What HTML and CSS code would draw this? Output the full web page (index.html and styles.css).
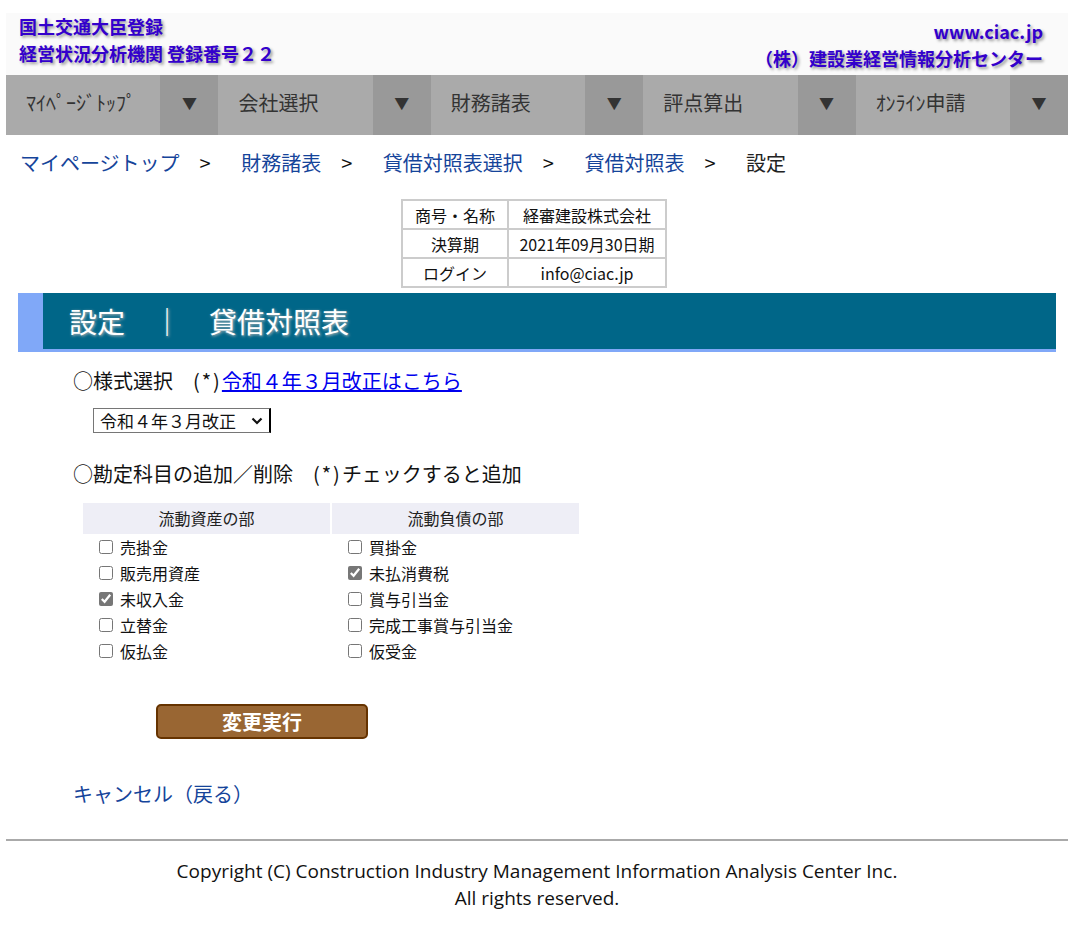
FILE: index.html
```html
<!DOCTYPE html>
<html lang="ja">
<head>
<meta charset="utf-8">
<title>設定 | 貸借対照表</title>
<link rel="stylesheet" href="styles.css">
</head>
<body>
<div class="page">
  <header class="site-header">
    <div class="org">
      <div>国土交通大臣登録</div>
      <div>経営状況分析機関 登録番号２２</div>
    </div>
    <div class="site">
      <div>www.ciac.jp</div>
      <div>（株）建設業経営情報分析センター</div>
    </div>
  </header>
  <nav class="menu">
    <div class="menu-item"><span class="menu-label">ﾏｲﾍﾟｰｼﾞﾄｯﾌﾟ</span><span class="menu-arrow">▼</span></div>
    <div class="menu-item"><span class="menu-label">会社選択</span><span class="menu-arrow">▼</span></div>
    <div class="menu-item"><span class="menu-label">財務諸表</span><span class="menu-arrow">▼</span></div>
    <div class="menu-item"><span class="menu-label">評点算出</span><span class="menu-arrow">▼</span></div>
    <div class="menu-item"><span class="menu-label">ｵﾝﾗｲﾝ申請</span><span class="menu-arrow">▼</span></div>
  </nav>
  <div class="crumbs">
    <a href="#">マイページトップ</a><span class="sep">&gt;</span>
    <a href="#">財務諸表</a><span class="sep">&gt;</span>
    <a href="#">貸借対照表選択</a><span class="sep">&gt;</span>
    <a href="#">貸借対照表</a><span class="sep">&gt;</span>
    <span class="current">設定</span>
  </div>
  <div class="info-wrap">
    <table class="info">
      <tr><th>商号・名称</th><td>経審建設株式会社</td></tr>
      <tr><th>決算期</th><td>2021年09月30日期</td></tr>
      <tr><th>ログイン</th><td>info@ciac.jp</td></tr>
    </table>
  </div>
  <h1 class="title-bar"><span class="title-text">設定　｜　貸借対照表</span></h1>
  <div class="content">
    <p class="section first">○様式選択　<span class="ast">(*)</span><a class="plain-link" href="#">令和４年３月改正はこちら</a></p>
    <div class="select-row">
      <select class="style-select"><option>令和４年３月改正</option></select>
    </div>
    <p class="section">○勘定科目の追加／削除　<span class="ast">(*)</span>チェックすると追加</p>
    <div class="acct-grid">
      <div class="acct-col">
        <div class="acct-head">流動資産の部</div>
        <label class="acct"><input type="checkbox">売掛金</label>
        <label class="acct"><input type="checkbox">販売用資産</label>
        <label class="acct"><input type="checkbox" checked>未収入金</label>
        <label class="acct"><input type="checkbox">立替金</label>
        <label class="acct"><input type="checkbox">仮払金</label>
      </div>
      <div class="acct-col">
        <div class="acct-head">流動負債の部</div>
        <label class="acct"><input type="checkbox">買掛金</label>
        <label class="acct"><input type="checkbox" checked>未払消費税</label>
        <label class="acct"><input type="checkbox">賞与引当金</label>
        <label class="acct"><input type="checkbox">完成工事賞与引当金</label>
        <label class="acct"><input type="checkbox">仮受金</label>
      </div>
    </div>
    <div class="btn-row"><button class="exec">変更実行</button></div>
    <a class="cancel" href="#">キャンセル（戻る）</a>
  </div>
  <hr class="rule">
  <footer class="footer">
    <div>Copyright (C) Construction Industry Management Information Analysis Center Inc.</div>
    <div>All rights reserved.</div>
  </footer>
</div>
</body>
</html>
```

FILE: styles.css
```css
html, body {
  margin: 0;
  padding: 0;
  background: #ffffff;
}
body {
  font-family: "Noto Sans CJK JP", "Noto Sans", sans-serif;
  color: #111;
}
.page {
  margin: 13px 11px 0 6px;
}
.site-header {
  background: #fafafa;
  height: 62px;
  display: flex;
  justify-content: space-between;
  padding: 0 25px 0 13px;
  font-weight: bold;
  font-size: 18px;
  color: #3300cc;
  text-shadow: 2px 2px 3px #999;
}
.org div, .site div {
  height: 27px;
  line-height: 27px;
}
.site { text-align: right; padding-top: 5px; }
.menu {
  display: flex;
  height: 60px;
}
.menu-item {
  flex: 1;
  display: flex;
}
.menu-label {
  flex: 1;
  background: #aaaaaa;
  color: #333;
  font-size: 20px;
  line-height: 56px;
  padding-left: 20px;
}
.menu-arrow {
  width: 58px;
  background: #999999;
  color: #333;
  font-size: 15px;
  line-height: 56px;
  text-align: center;
}
.crumbs {
  box-sizing: border-box;
  padding: 13px 0 0 14px;
  height: 64px;
  font-size: 20px;
  line-height: 30px;
}
.crumbs a {
  color: #15449a;
  text-decoration: none;
}
.crumbs .sep {
  margin: 0 26px 0 20px;
  color: #111;
}
.crumbs .current { color: #222; }
.info-wrap {
  display: flex;
  justify-content: center;
  padding-right: 6px;
}
.info {
  border-collapse: collapse;
  border: 2px solid #cccccc;
  font-size: 16px;
}
.info th, .info td {
  border: 2px solid #cccccc;
  font-weight: normal;
  height: 27px;
  padding: 0 6px;
  text-align: center;
}
.info th { width: 92px; }
.info td { width: 144px; }
.title-bar {
  margin: 5px 12px 0 12px;
  height: 56px;
  background: #006688;
  border-left: 25px solid #80a8f8;
  border-bottom: 3px solid #80a8f8;
  font-size: 28px;
  font-weight: normal;
  color: #ffffff;
  line-height: 56px;
  padding-left: 26px;
  text-shadow: 1px 1px 3px #bbb;
}
.content {
  padding-left: 67px;
}
.section {
  margin: 0;
  font-size: 20px;
  line-height: 30px;
  color: #111;
}
.section.first { margin-top: 14px; }
.ast { letter-spacing: 2px; }
.plain-link {
  color: #0000ee;
  text-decoration: underline;
}
.select-row {
  padding: 12px 0 26px 20px;
  height: 25px;
}
.style-select {
  box-sizing: border-box;
  -webkit-appearance: none;
  appearance: none;
  font-family: "Noto Sans CJK JP", sans-serif;
  font-size: 17px;
  line-height: 22px;
  width: 178px;
  height: 25px;
  border: 1px solid #767676;
  border-right: 2px solid #000;
  border-radius: 0;
  background-color: #fff;
  background-image: url("data:image/svg+xml,%3Csvg xmlns='http://www.w3.org/2000/svg' width='12' height='8' viewBox='0 0 12 8'%3E%3Cpath d='M1.5 1.5 L6 6 L10.5 1.5' fill='none' stroke='%23111' stroke-width='2.2'/%3E%3C/svg%3E");
  background-repeat: no-repeat;
  background-position: right 6px center;
  color: #111;
  padding: 0 4px 0 6px;
}
.acct-grid {
  display: flex;
  gap: 2px;
  margin: 14px 0 0 10px;
}
.acct-col {
  width: 247px;
  display: flex;
  flex-direction: column;
}
.acct-head {
  background: #eeeef6;
  height: 31px;
  line-height: 31px;
  text-align: center;
  font-size: 16px;
  color: #222;
}
.acct {
  display: flex;
  align-items: center;
  height: 26px;
  font-size: 16px;
  padding-left: 14px;
}
.acct input {
  margin: 0 7px 0 2px;
  width: 14px;
  height: 14px;
  accent-color: #777777;
}
.btn-row {
  padding: 40px 0 0 83px;
}
.exec {
  width: 212px;
  height: 35px;
  background: #996633;
  border: 2px solid #663300;
  border-radius: 5px;
  color: #ffffff;
  font-family: "Noto Sans CJK JP", sans-serif;
  font-weight: bold;
  font-size: 20px;
  line-height: 29px;
  padding: 0;
}
.cancel {
  display: block;
  width: max-content;
  margin-top: 40px;
  color: #15449a;
  font-size: 20px;
  line-height: 30px;
  text-decoration: none;
}
.rule {
  margin: 30px 0 0 0;
  border: 0;
  border-top: 2px solid #aaaaaa;
}
.footer {
  padding-top: 17px;
  text-align: center;
  font-family: "Open Sans", "Noto Sans", sans-serif;
  font-size: 19px;
  line-height: 27px;
  color: #111;
}
```
